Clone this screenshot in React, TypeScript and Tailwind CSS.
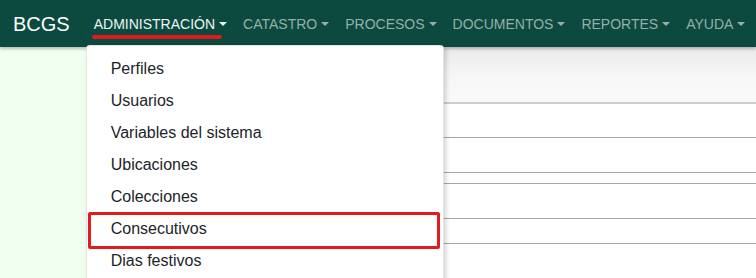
import { Fragment } from 'react';

const MENUS = ['CATASTRO', 'PROCESOS', 'DOCUMENTOS', 'REPORTES', 'AYUDA'];

const ADMIN_ITEMS = [
    'Perfiles',
    'Usuarios',
    'Variables del sistema',
    'Ubicaciones',
    'Colecciones',
    'Consecutivos',
    'Dias festivos',
];

// heights of table rows behind the dropdown (border included)
const ROWS = [34, 35, 11, 35, 25, 40];

function Caret() {
    return (
        <span className="inline-block ml-[4px] align-[3px] border-t-[4px] border-t-current border-x-[4px] border-x-transparent" />
    );
}

export default function App() {
    return (
        <div className="h-screen overflow-hidden bg-white font-['Liberation_Sans',Arial,sans-serif] flex flex-col">
            {/* Navbar */}
            <nav className="relative z-20 h-[47px] shrink-0 bg-[#0c4a3f] shadow-[0_2px_3px_rgba(0,0,0,0.25)] flex items-center pl-[13px]">
                <span className="text-[20px] leading-7 text-white mr-[16px]">BCGS</span>
                <ul className="flex items-center">
                    <li className="relative">
                        <a className="block px-2 py-2 text-[14px] leading-5 text-[#eef3f2] whitespace-nowrap">
                            ADMINISTRACIÓN
                            <Caret />
                        </a>
                        <span className="absolute left-[6px] top-[29px] w-[130px] h-[4px] rounded-full bg-[#de1a1a]" />

                        {/* Dropdown */}
                        <div className="absolute left-0 top-full mt-[3px] w-[358px] bg-white border border-black/10 rounded-[4px] pt-[7px] pb-2 shadow-[2px_2px_5px_rgba(0,0,0,0.18)]">
                            {ADMIN_ITEMS.map((item) => (
                                <div key={item} className="relative">
                                    <a className="block px-6 py-1 text-base leading-6 text-[#212529] whitespace-nowrap">{item}</a>
                                    {item === 'Consecutivos' && (
                                        <span className="absolute left-[1px] right-[3px] -top-[1px] -bottom-[4px] border-[3px] border-[#e31b1f] rounded-[2px]" />
                                    )}
                                </div>
                            ))}
                        </div>
                    </li>
                    {MENUS.map((menu) => (
                        <li key={menu}>
                            <a className="block px-2 py-2 text-[14px] leading-5 text-[#93b0aa] whitespace-nowrap">
                                {menu}
                                <Caret />
                            </a>
                        </li>
                    ))}
                </ul>
            </nav>

            {/* Body */}
            <div className="flex flex-1 min-h-0">
                <aside className="w-[120px] shrink-0 bg-[#f0fff0]" />
                <main className="flex-1">
                    <div className="h-[57px] bg-gradient-to-b from-[#e9e9e9] via-[#f6f6f6] to-[#fafafa] border-b-2 border-[#cdcdcd]" />
                    {ROWS.map((h, i) => (
                        <Fragment key={i}>
                            <div className="border-b border-[#a3a7ae]" style={{ height: h }} />
                        </Fragment>
                    ))}
                </main>
            </div>
        </div>
    );
}
